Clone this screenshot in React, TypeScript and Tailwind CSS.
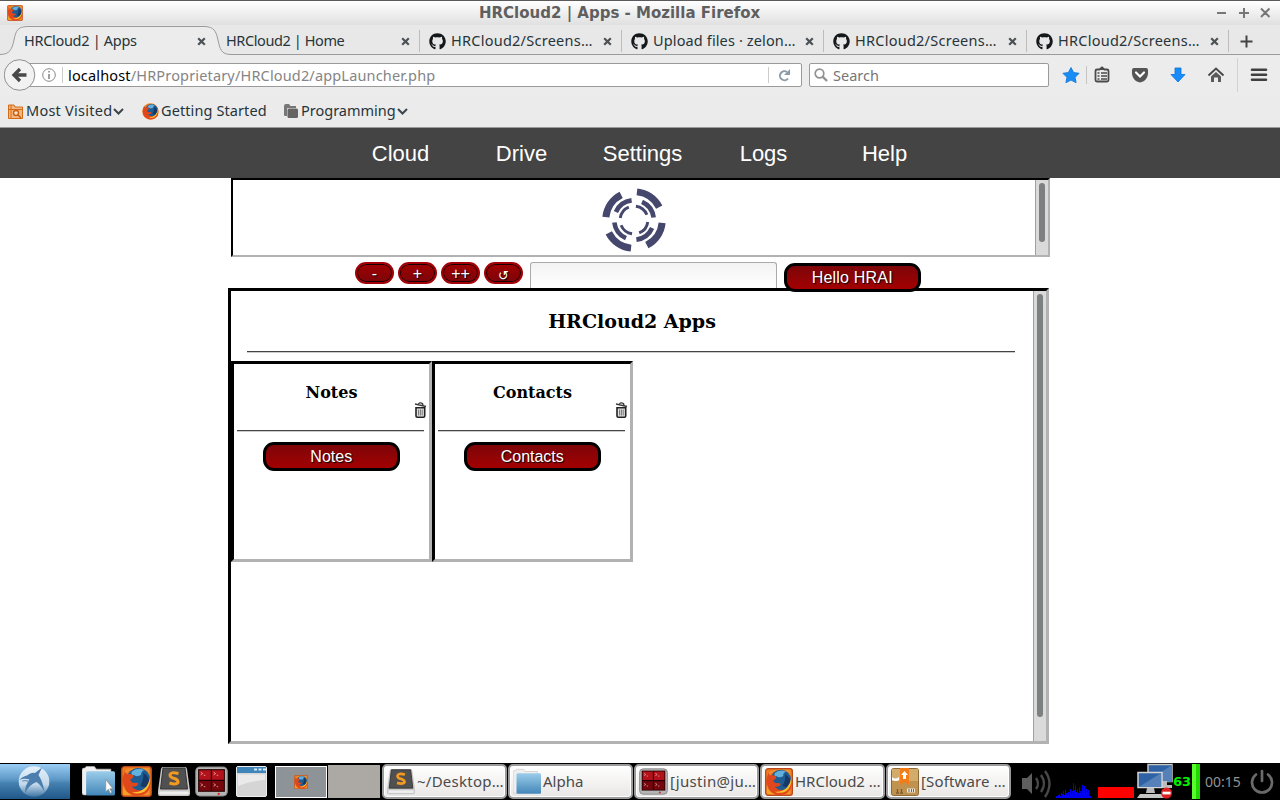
import React from "react";
import { FaGithub } from "react-icons/fa";

const UI = "font-['Noto_Sans',sans-serif]";

function FirefoxGlobe({ size, square = true }: { size: number; square?: boolean }) {
  return (
    <svg width={size} height={size} viewBox="0 0 32 32" className="block shrink-0">
      {square && <rect x="0.7" y="0.7" width="30.6" height="30.6" rx="3" fill="#ee7a20" stroke="#b8471b" strokeWidth="1.4" />}
      {square && <path d="M2 9 Q5 2 14 2 H29 V30 H24 Q31 22 29 12 Q20 0 8 5Z" fill="#f29431" opacity=".9" />}
      {!square && <circle cx="16" cy="16" r="15.5" fill="#f07d1a" />}
      <circle cx="18" cy="14" r="12" fill="#1f5c92" />
      <path d="M11 6 Q16 1 24 4 Q20 6 21 9 Q16 12 13 9 Q10 10 11 6Z" fill="#62b0dd" />
      <path d="M23 7 Q30 11 29 19 Q24 24 20 20 Q24 14 23 7Z" fill="#16396a" />
      <path d="M4 5 Q4 8 7 8.500 Q11 7.500 13 10 Q12.500 13 9.500 14 Q10 17.500 14 17.500 Q17 16.500 18 18.500 Q15.500 22.500 11 21 Q16 27 24 24 Q29 21 30 15 Q32 26 22 30 Q11 33 4 25 Q0 18 2 11 Q3 8 4 5Z" fill="#e0481c" />
      <path d="M30 11 Q31 21 24 26.500 Q18 30 11 27 Q19 28 25 22.500 Q29 18 30 11Z" fill="#fbc22d" />
      {square && <path d="M3 14 Q1 25 11 30 H4 Q2 30 2 28Z" fill="#f8b02c" opacity=".7" />}
    </svg>
  );
}

function CloseMark() {
  return (
    <svg width="9" height="9" viewBox="0 0 9 9" className="block shrink-0">
      <path d="M1.2 1.2 L7.8 7.8 M7.8 1.2 L1.2 7.8" stroke="#4b5256" strokeWidth="2.2" />
    </svg>
  );
}

function Tab({ label, width, tracking = "tracking-[0.25px]", github = true }: { label: string; width: string; tracking?: string; github?: boolean }) {
  return (
    <div className={`flex h-[22px] shrink-0 items-center border-r border-[#bdbdbd] pl-[9px] pr-[9px] ${width} ${tracking}`}>
      {github && <FaGithub size={17} color="#15181a" className="mr-[5px] shrink-0" />}
      <span className="flex-1 whitespace-nowrap">{label}</span>
      <CloseMark />
    </div>
  );
}

function TitleBar() {
  return (
    <div className="flex h-[25px] shrink-0 items-center border-t border-[#5a5a5a] bg-linear-to-b from-white to-[#e0e0e0] pl-[7px] pr-[8px]">
      <FirefoxGlobe size={16} />
      <div className="ml-[456px] flex-1 whitespace-nowrap font-['DejaVu_Sans',sans-serif] text-[15px] leading-6 font-bold text-[#5f5f5f]">
        HRCloud2 | Apps - Mozilla Firefox
      </div>
      <svg width="58" height="14" viewBox="0 0 58 14" stroke="#777" strokeWidth="2" fill="none">
        <path d="M3 7 h9 M25 7 h10 M30 2 v10 M47 2.500 l8.500 8.500 M55.500 2.500 l-8.500 8.500" />
      </svg>
    </div>
  );
}

function TabStrip() {
  return (
    <div className={`relative flex h-[31px] shrink-0 items-center bg-[#e8e8e8] pt-px text-[14.5px] text-[#27343a] ${UI}`}>
      <svg className="absolute left-0 top-0" width="1280" height="31" viewBox="0 0 1280 31">
        <path d="M0 29.500 C10 29.500 12 24 14 15 C16 5 18 2 27 1.500 H205 C214 2 216 6 218 15 C220 24 221 29.500 231 29.500 H1280 V31 H0Z" fill="#ececec" />
        <path d="M0 29.500 C10 29.500 12 24 14 15 C16 5 18 2 27 1.500 H205 C214 2 216 6 218 15 C220 24 221 29.500 231 29.500 H1280" fill="none" stroke="#9b9b9b" />
      </svg>
      <div className="relative flex w-[217px] shrink-0 items-center pl-6 pr-[11px] tracking-[-0.3px]">
        <span className="flex-1 whitespace-nowrap">HRCloud2 | Apps</span>
        <CloseMark />
      </div>
      <div className="relative flex">
        <Tab label="HRCloud2 | Home" width="w-[203px]" tracking="tracking-[-0.4px]" github={false} />
        <Tab label="HRCloud2/Screens…" width="w-[202px]" />
        <Tab label="Upload files · zelon…" width="w-[202px]" tracking="tracking-[0.13px]" />
        <Tab label="HRCloud2/Screens…" width="w-[203px]" />
        <Tab label="HRCloud2/Screens…" width="w-[202px]" />
      </div>
      <svg className="relative ml-[11px]" width="13" height="13" viewBox="0 0 13 13">
        <path d="M0.500 6.500 h12 M6.500 0.500 v12" stroke="#444" strokeWidth="2" />
      </svg>
    </div>
  );
}

function ToolbarIcons() {
  return (
    <svg width="225" height="38" viewBox="1050 56 225 38" className="ml-[1px] shrink-0">
      <path d="M1071 67.500 l2.600 5 5.500 .8 -4 4 1 5.400 -5.100 -2.600 -5.100 2.600 1 -5.400 -4 -4 5.500 -.8Z" fill="#1a8df5" stroke="#0a72d8" strokeWidth=".8" />
      <path d="M1086.500 66 v18" stroke="#c4c4c4" />
      <path d="M1099.500 69.500 L1102 67.500 L1104.500 69.500 H1107 Q1108.500 69.500 1108.500 71 V80 Q1108.500 81.500 1107 81.500 H1097 Q1095.500 81.500 1095.500 80 V71 Q1095.500 69.500 1097 69.500Z" fill="#ececec" stroke="#4a4a4a" strokeWidth="1.800" />
      <path d="M1099 70 l3 -2.500 3 2.500Z" fill="#4a4a4a" />
      <path d="M1097.500 73 h2 M1101 73 h6 M1097.500 76 h2 M1101 76 h6 M1097.500 79 h2 M1101 79 h6" stroke="#4a4a4a" strokeWidth="1.300" />
      <path d="M1134 68 H1146 Q1148 68 1148 70 V74 Q1147 81 1140 82.500 Q1133 81 1132 74 V70 Q1132 68 1134 68Z" fill="#555" />
      <path d="M1136 72.500 l4 4 4 -4" fill="none" stroke="#fff" strokeWidth="2.200" strokeLinecap="round" />
      <path d="M1175 68 h6 v6.500 h4 L1178 82 L1171 74.500 h4Z" fill="#178cfa" stroke="#0872dc" strokeWidth=".8" />
      <path d="M1208.500 75.500 L1216 68.500 L1223.500 75.500" fill="none" stroke="#4a4a4a" strokeWidth="2" />
      <path d="M1211 76.500 L1216 72 L1221 76.500 V82 H1218 V77.500 H1214 V82 H1211Z" fill="#5a5a5a" />
      <path d="M1237.500 58 v34" stroke="#d2d2d2" />
      <path d="M1252 69.700 h14 M1252 74.700 h14 M1252 79.700 h14" stroke="#404040" strokeWidth="2.600" strokeLinecap="round" />
    </svg>
  );
}

function Toolbar() {
  return (
    <div className={`flex h-[39px] shrink-0 items-center bg-[#ececec] pb-px text-[14.5px] ${UI}`}>
      <svg width="32" height="34" viewBox="0 0 32 34" className="relative z-10 ml-1 shrink-0">
        <circle cx="15.500" cy="17" r="15.300" fill="#f2f2f2" stroke="#8f8f8f" />
        <path d="M22.500 17 H11 M16 11 L10 17 L16 23" fill="none" stroke="#484848" strokeWidth="3.300" />
      </svg>
      <div className="-ml-[10px] flex h-6 w-[776px] shrink-0 items-center rounded-r-[2px] border border-[#9a9a9a] bg-white pl-[15px]">
        <svg width="14" height="14" viewBox="0 0 14 14" fill="none" stroke="#888">
          <circle cx="7" cy="7" r="6.300" />
          <path d="M7 6 v5 M7 3 v1.500" strokeWidth="1.600" />
        </svg>
        <div className="ml-[6px] mr-[5px] h-4 w-px bg-[#ccc]" />
        <span className="flex-1 whitespace-nowrap pt-px tracking-[0.16px] text-[#858585]"><span className="text-black">localhost</span>/HRProprietary/HRCloud2/appLauncher.php</span>
        <div className="mr-[9px] h-4 w-px bg-[#ccc]" />
        <svg width="13" height="13" viewBox="0 0 13 13" className="mr-[10px]">
          <path d="M10 9.500 A4.500 4.500 0 1 1 9 3" fill="none" stroke="#8b9ba9" strokeWidth="2" />
          <path d="M12 0 V6 H6Z" fill="#8b9ba9" />
        </svg>
      </div>
      <div className="ml-[7px] flex h-6 w-[240px] shrink-0 items-center rounded-[2px] border border-[#9a9a9a] bg-white pl-1 text-[#777]">
        <svg width="14" height="14" viewBox="0 0 14 14" fill="none" stroke="#929292">
          <circle cx="5.500" cy="5.500" r="4.300" strokeWidth="1.700" />
          <path d="M8.500 8.500 L13 13" strokeWidth="2.400" />
        </svg>
        <span className="ml-[5px] pt-px">Search</span>
      </div>
      <ToolbarIcons />
    </div>
  );
}

function Chevron() {
  return (
    <svg width="11" height="7" viewBox="0 0 11 7" className="ml-px">
      <path d="M1 1 L5.500 5.500 L10 1" fill="none" stroke="#3d464a" strokeWidth="2" />
    </svg>
  );
}

function Bookmarks() {
  return (
    <div className={`flex h-[33px] shrink-0 items-center border-b border-[#999] bg-[#ebebeb] pl-2 text-[14.5px] text-[#27343a] ${UI}`}>
      <div className="flex w-[134px] items-center">
        <svg width="15" height="15" viewBox="0 0 15 15" className="mr-[3px]">
          <path d="M.5 1 H6 L7 3 H14.500 V14.500 H.5Z" fill="#f3b783" stroke="#d36a16" />
          <path d="M1 5.500 H14 M3 1 V14" stroke="#d36a16" />
          <circle cx="8" cy="9" r="2.500" fill="#fbe5cd" stroke="#c95f10" strokeWidth="1.400" />
          <path d="M10 11 l3 3" stroke="#c95f10" strokeWidth="1.500" />
        </svg>
        <span className="whitespace-nowrap tracking-[0.25px]">Most Visited</span><Chevron />
      </div>
      <div className="flex w-[142px] items-center">
        <span className="mr-[2px]"><FirefoxGlobe size={17} square={false} /></span>
        <span className="whitespace-nowrap tracking-[0.1px]">Getting Started</span>
      </div>
      <div className="flex items-center">
        <svg width="14" height="14" viewBox="0 0 14 14" className="mr-[3px]">
          <path d="M0 2 Q0 0 2 0 H5 L6.500 2 H12 V4 H4 Q3 4 3 5 V12 H1 Q0 12 0 11Z" fill="#777" />
          <rect x="3.500" y="4.500" width="10.500" height="9.500" rx="1.500" fill="#646464" />
        </svg>
        <span className="whitespace-nowrap">Programming</span><Chevron />
      </div>
    </div>
  );
}

function SiteNav() {
  return (
    <nav className="flex h-[50px] shrink-0 items-center bg-[#444] pl-[340px] font-['Liberation_Sans',sans-serif] text-[22px] text-white">
      {["Cloud", "Drive", "Settings", "Logs", "Help"].map((n) => (
        <a key={n} className="w-[121px] text-center">{n}</a>
      ))}
    </nav>
  );
}

function Emblem() {
  const c = 32;
  const arcs = [
    { r: 28.3, w: 7, a: [-84, -27] },
    { r: 19.8, w: 4.600, a: [-66, -7] },
    { r: 13.900, w: 2.900, a: [-82, -22] },
  ];
  const pt = (r: number, d: number) => {
    const t = (d * Math.PI) / 180;
    return `${(c + r * Math.cos(t)).toFixed(2)} ${(c + r * Math.sin(t)).toFixed(2)}`;
  };
  return (
    <svg width="64" height="64" viewBox="0 0 64 64" fill="none" stroke="#45476c" className="block">
      {[0, 90, 180, 270].map((k) =>
        arcs.map((s) => (
          <path key={`${k}-${s.r}`} strokeWidth={s.w} d={`M${pt(s.r, s.a[0] + k)} A${s.r} ${s.r} 0 0 1 ${pt(s.r, s.a[1] + k)}`} />
        ))
      )}
    </svg>
  );
}

function RedPill({ children }: { children: React.ReactNode }) {
  return (
    <button className="mr-1 flex h-[22px] w-[39px] shrink-0 items-center justify-center rounded-[11px] border-2 border-[#a30008] bg-linear-to-b from-[#a00000] to-[#7d0508] pt-[2px] font-['Liberation_Sans','DejaVu_Sans',sans-serif] text-[16px] leading-4 text-white shadow-[inset_0_0_0_1px_#160000] [text-shadow:1px_1px_1px_#000]">
      {children}
    </button>
  );
}

function RedButton({ children, tracking = "" }: { children: React.ReactNode; tracking?: string }) {
  return (
    <button className={`relative z-10 flex h-[29px] w-[136.5px] shrink-0 items-center justify-center rounded-[11px] border-[3px] border-black bg-linear-to-b from-[#7d0508] to-[#a30000] font-['Liberation_Sans',sans-serif] text-[16px] leading-4 text-white [text-shadow:1px_1px_1px_#000] ${tracking}`}>
      {children}
    </button>
  );
}

function Trash() {
  return (
    <svg width="13" height="16" viewBox="0 0 13 16" className="block">
      <path d="M1 2 L12 4.500 M4.500 2.300 Q5.500 0 8.500 1.500 L9 3.300" fill="none" stroke="#3a3a3a" strokeWidth="1.300" />
      <path d="M2 5.700 H10.700 V14 Q10.700 15.200 9.500 15.200 H3.200 Q2 15.200 2 14Z" fill="#e2e2e2" stroke="#222" strokeWidth="1.600" />
      <path d="M4.600 7.500 V13.500 M6.400 7.500 V13.500 M8.200 7.500 V13.500" stroke="#666" strokeWidth=".9" />
    </svg>
  );
}

function AppCard({ name }: { name: string }) {
  return (
    <div className="flex h-[201px] w-[201px] shrink-0 flex-col border-[3px] border-t-black border-r-[#b2b2b2] border-b-[#b2b2b2] border-l-black px-[3px] font-['DejaVu_Serif',serif]">
      <h3 className="mt-[19px] h-[19px] text-center text-[16px] leading-5 font-bold text-black">{name}</h3>
      <div className="-mr-px flex h-4 justify-end"><Trash /></div>
      <div className="mt-3 mr-[2px] h-[2px] border-t border-b border-t-[#444] border-b-[#ccc]" />
      <div className="mt-[10px] flex pl-[26px]"><RedButton>{name}</RedButton></div>
    </div>
  );
}

function PageBody() {
  return (
    <main className="flex flex-1 flex-col bg-white">
      <div className="ml-[231px] flex h-[79px] w-[819px] shrink-0 border-2 border-t-black border-r-[#b2b2b2] border-b-[#b2b2b2] border-l-black">
        <div className="flex-1 pl-[369px] pt-[8px]"><Emblem /></div>
        <div className="w-[13px] border-l border-[#a0a0a0] bg-[#dadada] pl-[3px] pt-[3px]">
          <div className="h-[59px] w-[6px] rounded-full bg-[#7c8080]" />
        </div>
      </div>
      <div className="flex h-[31px] shrink-0 items-start pl-[355px] pt-[5px]">
        <RedPill>-</RedPill>
        <RedPill>+</RedPill>
        <RedPill>++</RedPill>
        <RedPill><span className="pt-[3px] text-[13px]">↺</span></RedPill>
        <div className="ml-[3px] mr-[7px] h-[26px] w-[247px] rounded-t-[3px] border border-b-0 border-[#aaa] bg-linear-to-b from-[#f3f3f3] to-white" />
        <div className="mt-px"><RedButton tracking="tracking-[0.2px]">Hello HRAI</RedButton></div>
      </div>
      <div className="ml-[228px] flex h-[456px] w-[821px] shrink-0 border-[3px] border-t-black border-r-[#b2b2b2] border-b-[#b2b2b2] border-l-black">
        <div className="flex flex-1 flex-col">
          <h2 className="mt-[18px] h-6 text-center font-['DejaVu_Serif',serif] text-[19px] leading-6 font-bold text-black">HRCloud2 Apps</h2>
          <div className="ml-4 mr-[18px] mt-[18px] h-[2px] border-t border-b border-t-[#444] border-b-[#ccc]" />
          <div className="mt-2 flex">
            <AppCard name="Notes" />
            <AppCard name="Contacts" />
          </div>
        </div>
        <div className="w-[13px] border-l border-[#a0a0a0] bg-[#dadada] pl-[3px] pt-[3px]">
          <div className="h-[423px] w-[6px] rounded-full bg-[#7c8080]" />
        </div>
      </div>
    </main>
  );
}

function SublimeIcon({ size }: { size: number }) {
  return (
    <svg width={size} height={size} viewBox="0 0 32 32" className="block shrink-0">
      <path d="M5 1 H27 Q28.500 1 29 3 L32 25 V28 Q32 30 30 30 H2 Q0 30 0 28 V25 L3 3 Q3.500 1 5 1Z" fill="#c8c8c8" />
      <path d="M5 2 H27 L29.500 23 H2.500Z" fill="#505050" stroke="#333" />
      <path d="M1.500 25.500 H30.500 V28.500 H1.500Z" fill="#eee" />
      <path d="M20.500 7.500 Q12.500 5.500 12 9 Q12 11.500 16.500 12.500 Q20.500 14 20 16.500 Q18 19 11.500 17" fill="none" stroke="#f39a20" strokeWidth="3" />
    </svg>
  );
}

function TerminalIcon({ size }: { size: number }) {
  return (
    <svg width={size} height={size} viewBox="0 0 32 32" className="block shrink-0">
      <rect x="0.700" y="2" width="30.600" height="28" rx="4" fill="#b5b5b5" stroke="#888" />
      <rect x="3" y="4" width="26" height="22" fill="#250000" />
      <path d="M4 5 h11.300 v9.300 H4Z M16.500 5 H28 v9.300 H16.500Z" fill="#b3121b" />
      <path d="M4 15.600 h11.300 V25 H4Z M16.500 15.600 H28 V25 H16.500Z" fill="#74060c" />
      <path d="M5.500 7 l2 1.300 -2 1.300 M8.500 10 h1.500 M18 7 l2 1.300 -2 1.300 M21 10 h1.500 M5.500 18 l2 1.300 -2 1.300 M8.500 21 h1.500 M18 18 l2 1.300 -2 1.300 M21 21 h1.500" fill="none" stroke="#e8aaaa" strokeWidth=".8" />
      <circle cx="23" cy="28" r="1.100" fill="#e02020" />
    </svg>
  );
}

function FolderIcon({ size, cursor = false }: { size: number; cursor?: boolean }) {
  return (
    <svg width={size} height={size} viewBox="0 0 32 32" className="block shrink-0">
      <defs>
        <linearGradient id="folder" x1="0" y1="0" x2="0" y2="1">
          <stop offset="0" stopColor="#9ccdea" /><stop offset="1" stopColor="#4286b8" />
        </linearGradient>
      </defs>
      <path d="M0 5 Q0 3 2 3 H3 L4 1.500 H12 L14 4 H28 V9 L4 29 H2 Q0 29 0 27Z" fill="#efefef" stroke="#bbb" strokeWidth=".6" />
      <rect x="4" y="6" width="28" height="23.500" rx="1.500" fill="url(#folder)" />
      {cursor && <path d="M23 14 V26 L25.500 23.500 L27.500 27.500 L29 26.500 L27 23 H30Z" fill="#fff" stroke="#888" strokeWidth=".7" />}
    </svg>
  );
}

function WindowIcon() {
  return (
    <svg width="31" height="31" viewBox="0 0 31 31" className="block shrink-0">
      <rect x=".5" y=".5" width="30" height="30" rx="1.500" fill="#d5d5d5" stroke="#eee" />
      <rect x="1" y="1" width="29" height="6" fill="#3e85ba" />
      <path d="M18 3.500 h3 M22.500 3.500 h3 M27 3.500 h3" stroke="#d8ecfa" strokeWidth="2" />
      <path d="M2 8.500 H29 V14 Q15 15 2 20Z" fill="#eaeaea" />
    </svg>
  );
}

function PackageIcon() {
  return (
    <svg width="28" height="28" viewBox="0 0 28 28" className="block shrink-0">
      <rect x=".5" y=".5" width="27" height="27" rx="2" fill="#bf9250" stroke="#8d6a35" />
      <rect x="1" y="1" width="26" height="12" fill="#d3ab6b" />
      <path d="M9 0 H18 V17 L13.500 14 L9 17Z" fill="#f37b18" />
      <path d="M13.500 3 L17 7 H15 V11 H12 V7 H10Z" fill="#fff" />
      <path d="M1 9 Q4 12 8 9 V12 Q5 14 1 12Z" fill="#fff" />
      <path d="M16 20.500 h8 v4 h-8Z" fill="#f0e8d8" />
      <path d="M5 25 h3 M9 25 h3 M6.500 24 v-3 M10.500 24 v-3" stroke="#7a5a2a" strokeWidth="1.300" />
      <path d="M18 21 v3 M20.500 21 v3 M22.500 21 v3" stroke="#666" />
    </svg>
  );
}

function TaskButton({ icon, label, tracking = "" }: { icon: React.ReactNode; label: string; tracking?: string }) {
  return (
    <div className="mr-px flex h-[35px] w-[125px] shrink-0 items-center rounded-[5px] border-2 border-[#9a9a9a] bg-linear-to-b from-white to-[#e9e7e5] pl-[3px] shadow-[inset_0_0_0_1px_#fff]">
      {icon}
      <span className={`ml-[2px] whitespace-nowrap text-[15px] ${tracking}`}>{label}</span>
    </div>
  );
}

function StartLogo() {
  return (
    <svg width="70" height="35" viewBox="0 0 70 35" className="block shrink-0">
      <defs>
        <linearGradient id="start" x1="0" y1="0" x2="0" y2="1">
          <stop offset="0" stopColor="#9acdf5" /><stop offset=".45" stopColor="#5d97c6" /><stop offset=".55" stopColor="#4480b0" /><stop offset="1" stopColor="#1f5788" />
        </linearGradient>
        <linearGradient id="disc" x1="0" y1="0" x2="0" y2="1">
          <stop offset="0" stopColor="#e4f1fb" /><stop offset=".6" stopColor="#c2d8ea" /><stop offset="1" stopColor="#3d76a4" />
        </linearGradient>
      </defs>
      <rect width="70" height="35" fill="url(#start)" />
      <circle cx="34" cy="17.500" r="15.300" fill="url(#disc)" />
      <path d="M19.500 16 Q22 12.500 27 11.500 Q31 8 35 9 L42 3.500 L38.500 11 Q43 18 44.500 28 Q41 21 36.500 18 Q30 20 25 29 Q25 21 29.500 15.500 Q24 14 19.500 16Z" fill="#4c7fad" />
      <path d="M22 17 Q26 16 29 17.500" fill="none" stroke="#6a97bd" strokeWidth="1.200" />
    </svg>
  );
}

function Tray() {
  const bars = [2, 1, 3, 4, 2, 5, 4, 7, 3, 8, 5, 3, 6, 2, 9, 4, 7, 15, 8, 13, 6, 9, 5, 11, 7, 4, 13, 8, 12, 5, 9, 6, 8, 3, 2, 1];
  return (
    <svg width="162" height="37" viewBox="1018 763 162 37" className="block shrink-0">
      <path d="M1022 778 h5 l5 -5 v21 l-5 -5 h-5Z" fill="#5e5e5e" />
      <path d="M1036 778 Q1040 783.500 1036 789 M1041 775 Q1047 783.500 1041 792 M1045 771 Q1054 783.500 1045 797" fill="none" stroke="#484848" strokeWidth="2.400" />
      {bars.map((h, i) => <rect key={i} x={1056 + i} y={798 - h} width="1" height={h} fill="#0000f5" />)}
      <rect x="1098" y="787" width="36" height="11" fill="#f00" />
      <rect x="1148" y="764.500" width="24" height="17" fill="#2f62a5" stroke="#c7c7c7" strokeWidth="1.500" />
      <path d="M1148 781 L1172 765 V782Z" fill="#5580b8" />
      <path d="M1157 781 h10 v4 h5 v3 h-15Z" fill="#bbb" />
      <rect x="1138" y="772.500" width="24" height="15" fill="#2f62a5" stroke="#d5d5d5" strokeWidth="1.500" />
      <path d="M1139 787 L1161 773 V787Z" fill="#5580b8" />
      <path d="M1147 788 h7 l1 5 h-9Z" fill="#bbb" />
      <path d="M1140 794 h24 l1 4 h-28Z" fill="#c5c5c5" />
      <circle cx="1166.500" cy="793" r="5.500" fill="#df2020" />
      <rect x="1162.500" y="791.700" width="8" height="2.700" fill="#fff" />
    </svg>
  );
}

function Taskbar() {
  return (
    <div className={`flex h-[37px] shrink-0 items-center bg-black text-[14px] text-[#4a4a4a] ${UI}`}>
      <StartLogo />
      <div className="ml-3 flex w-[193px] shrink-0 items-center">
        <div className="w-[39px]"><FolderIcon size={33} cursor /></div>
        <div className="w-[37px]"><FirefoxGlobe size={31} /></div>
        <div className="w-[37px]"><SublimeIcon size={32} /></div>
        <div className="w-[41px]"><TerminalIcon size={33} /></div>
        <WindowIcon />
      </div>
      <div className="flex h-8 w-[52px] shrink-0 items-center justify-center border border-white bg-[#8d9397]">
        <FirefoxGlobe size={14} />
      </div>
      <div className="ml-px mr-[2px] h-[33px] w-[52px] shrink-0 bg-[#aca8a3]" />
      <TaskButton icon={<SublimeIcon size={28} />} label="~/Desktop…" tracking="tracking-[0.25px]" />
      <TaskButton icon={<FolderIcon size={28} />} label="Alpha" />
      <TaskButton icon={<TerminalIcon size={29} />} label="[justin@ju…" tracking="tracking-[0.3px]" />
      <TaskButton icon={<FirefoxGlobe size={28} />} label="HRCloud2 …" />
      <TaskButton icon={<PackageIcon />} label="[Software …" tracking="tracking-[0.15px]" />
      <div className="ml-[6px]"><Tray /></div>
      <span className="-ml-[7px] w-[18px] font-['DejaVu_Sans',sans-serif] text-[13px] font-bold text-[#00f000]">63</span>
      <div className="ml-px h-[35px] w-2 shrink-0 border-l-4 border-[#58ff2d] bg-[#20d800]" />
      <span className="ml-[5px] w-[44px] text-[#929292]">00:15</span>
      <svg width="26" height="26" viewBox="0 0 26 26" className="block shrink-0" fill="none" stroke="#6a6a6a" strokeWidth="2.700" strokeLinecap="round">
        <path d="M7 5.500 A10 10 0 1 0 19 5.500 M13 2 V12" />
      </svg>
    </div>
  );
}

export default function App() {
  return (
    <div className="flex h-[800px] w-[1280px] flex-col overflow-hidden bg-white">
      <TitleBar />
      <TabStrip />
      <Toolbar />
      <Bookmarks />
      <SiteNav />
      <PageBody />
      <Taskbar />
    </div>
  );
}
